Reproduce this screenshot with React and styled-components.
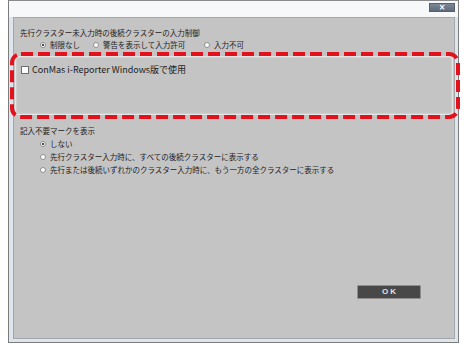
import React from "react";
import styled, { createGlobalStyle } from "styled-components";

const Global = createGlobalStyle`
  html, body { margin: 0; padding: 0; background: #ffffff; }
  body { font-family: "Noto Sans CJK JP", "Noto Sans", sans-serif; }
  * { box-sizing: border-box; }
`;

const Page = styled.div`
  padding-left: 8px;
`;

const Window = styled.div`
  width: 451px;
  height: 343px;
  border: 1px solid #7c7c7c;
  border-top-color: #8a8a8a;
  background: #dfe5ec;
  display: flex;
  flex-direction: column;
`;

const TitleBar = styled.div`
  height: 16px;
  background: #f6f8fa;
  display: flex;
  justify-content: flex-end;
  align-items: flex-start;
  padding: 2px 3px 0 0;
`;

const CloseButton = styled.div`
  width: 26px;
  height: 9px;
  background: linear-gradient(#7b8794, #5f6b78);
  border: 1px solid #56616d;
  color: #ffffff;
  font-family: "DejaVu Sans", sans-serif;
  font-size: 8px;
  font-weight: bold;
  line-height: 7px;
  text-align: center;
`;

const Body = styled.div`
  flex: 1;
  display: flex;
  flex-direction: column;
  padding: 0 3px 3px 4px;
`;

const Panel = styled.div`
  flex: 1;
  background: #c4c4c4;
  border: 1px solid #a2a7ac;
  display: flex;
  flex-direction: column;
  color: #1c1c1c;
  font-size: 7.5px;
`;

const Section = styled.div`
  padding: ${(p) => p.$top || 0}px 0 0 6px;
`;

const Heading = styled.div`
  line-height: ${(p) => p.$lh || 13}px;
  white-space: nowrap;
`;

const OptionRow = styled.div`
  display: flex;
  padding-left: 20px;
  line-height: ${(p) => p.$lh || 13}px;
`;

const OptionList = styled.div`
  display: flex;
  flex-direction: column;
`;

const Option = styled.div`
  display: flex;
  align-items: center;
  white-space: nowrap;
  width: ${(p) => (p.$w ? `${p.$w}px` : "auto")};
  height: ${(p) => p.$lh || 13}px;
`;

const Radio = styled.span`
  width: 6px;
  height: 6px;
  border-radius: 50%;
  border: 1px solid #8d8d8d;
  background: #ffffff;
  margin-right: 4px;
  flex: none;
  position: relative;
  &::after {
    content: "";
    display: ${(p) => (p.$checked ? "block" : "none")};
    position: absolute;
    left: 1px;
    top: 1px;
    width: 2px;
    height: 2px;
    border-radius: 50%;
    background: #111;
  }
`;

const Annotated = styled.div`
  position: relative;
  margin: 1px -6px 0 -4px;
  height: 67px;
  padding: 4px 7px 4px 5px;
  display: flex;
`;

const Dashes = styled.svg`
  position: absolute;
  inset: 0;
  width: 100%;
  height: 100%;
  overflow: visible;
  pointer-events: none;
`;

const GroupBox = styled.div`
  flex: 1;
  border-radius: 3px;
  background: #c4c4c4;
  box-shadow: inset 0 0 2px 1px rgba(255, 255, 255, 0.75);
  padding: 7px 0 0 6px;
`;

const CheckRow = styled.div`
  display: flex;
  align-items: center;
  height: 13px;
  font-size: 9px;
  white-space: nowrap;
`;

const Checkbox = styled.span`
  width: 8px;
  height: 8px;
  border: 1px solid #6e6e6e;
  background: #ffffff;
  margin-right: 3px;
  flex: none;
`;

const Footer = styled.div`
  margin-top: auto;
  display: flex;
  justify-content: flex-end;
  padding: 0 33px 39px 0;
`;

const OkButton = styled.div`
  width: 64px;
  height: 14px;
  background: #484848;
  border: 1px solid #8e8e8e;
  border-radius: 1px;
  color: #e2e2e2;
  font-family: "Liberation Sans", sans-serif;
  font-size: 8px;
  font-weight: bold;
  letter-spacing: 2px;
  line-height: 12px;
  text-align: center;
  padding-left: 2px;
`;

export default function App() {
  return (
    <Page>
      <Global />
      <Window>
        <TitleBar>
          <CloseButton>×</CloseButton>
        </TitleBar>
        <Body>
          <Panel>
            <Section $top={9}>
              <Heading $lh={12}>先行クラスター未入力時の後続クラスターの入力制御</Heading>
              <OptionRow $lh={12}>
                <Option $w={53} $lh={12}>
                  <Radio $checked />
                  制限なし
                </Option>
                <Option $w={111} $lh={12}>
                  <Radio />
                  警告を表示して入力許可
                </Option>
                <Option $lh={12}>
                  <Radio />
                  入力不可
                </Option>
              </OptionRow>
            </Section>
            <Annotated>
              <Dashes viewBox="0 0 450 67" preserveAspectRatio="none">
                <rect
                  x="2"
                  y="2"
                  width="446"
                  height="63"
                  rx="9"
                  ry="9"
                  fill="none"
                  stroke="#e3111b"
                  strokeWidth="4"
                  strokeDasharray="12 5"
                />
              </Dashes>
              <GroupBox>
                <CheckRow>
                  <Checkbox />
                  ConMas i-Reporter Windows版で使用
                </CheckRow>
              </GroupBox>
            </Annotated>
            <Section $top={5}>
              <Heading>記入不要マークを表示</Heading>
              <OptionRow>
                <OptionList>
                  <Option>
                    <Radio $checked />
                    しない
                  </Option>
                  <Option>
                    <Radio />
                    先行クラスター入力時に、すべての後続クラスターに表示する
                  </Option>
                  <Option>
                    <Radio />
                    先行または後続いずれかのクラスター入力時に、もう一方の全クラスターに表示する
                  </Option>
                </OptionList>
              </OptionRow>
            </Section>
            <Footer>
              <OkButton>OK</OkButton>
            </Footer>
          </Panel>
        </Body>
      </Window>
    </Page>
  );
}
